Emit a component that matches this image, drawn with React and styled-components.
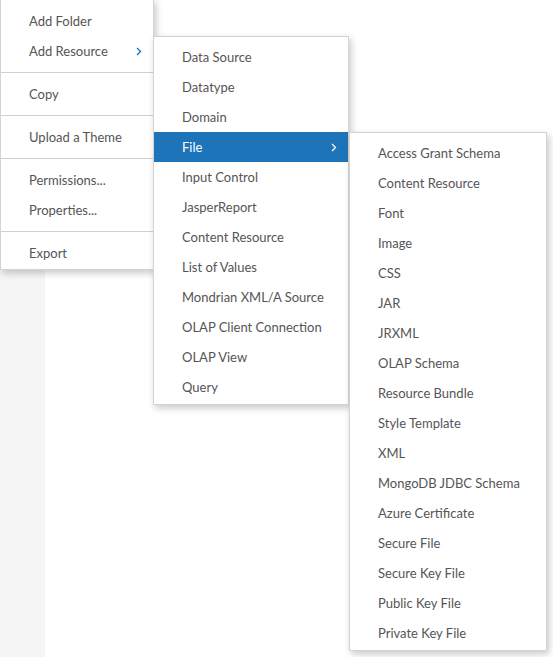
import React from "react";
import styled, { createGlobalStyle } from "styled-components";

const GlobalStyle = createGlobalStyle`
  html, body {
    margin: 0;
    padding: 0;
    height: 100%;
  }
  body {
    font-family: "Lato", "Liberation Sans", sans-serif;
    background: #ffffff;
  }
  #root {
    height: 100%;
  }
`;

const repoActions = [
  [{ label: "Add Folder" }, { label: "Add Resource", sub: "resource" }],
  [{ label: "Copy" }],
  [{ label: "Upload a Theme" }],
  [{ label: "Permissions..." }, { label: "Properties..." }],
  [{ label: "Export" }],
];

const resourceTypes = [
  { label: "Data Source" },
  { label: "Datatype" },
  { label: "Domain" },
  { label: "File", sub: "file", active: true },
  { label: "Input Control" },
  { label: "JasperReport" },
  { label: "Content Resource" },
  { label: "List of Values" },
  { label: "Mondrian XML/A Source" },
  { label: "OLAP Client Connection" },
  { label: "OLAP View" },
  { label: "Query" },
];

const fileTypes = [
  "Access Grant Schema",
  "Content Resource",
  "Font",
  "Image",
  "CSS",
  "JAR",
  "JRXML",
  "OLAP Schema",
  "Resource Bundle",
  "Style Template",
  "XML",
  "MongoDB JDBC Schema",
  "Azure Certificate",
  "Secure File",
  "Secure Key File",
  "Public Key File",
  "Private Key File",
].map((label) => ({ label }));

// small chevron shown on items that open a submenu
const Chevron = ({ color }) => (
  <svg width="6" height="9" viewBox="0 0 6 9" fill="none">
    <path d="M1 1l3.5 3.5L1 8" stroke={color} strokeWidth="1.3" />
  </svg>
);

function MenuItem({ item, children }) {
  return (
    <Item $active={item.active}>
      <Label>{item.label}</Label>
      {item.sub && (
        <Arrow>
          <Chevron color={item.active ? "#ffffff" : "#1f6fb5"} />
        </Arrow>
      )}
      {children}
    </Item>
  );
}

export default function App() {
  return (
    <Page>
      <GlobalStyle />
      <SideRail />
      <Workspace />

      <RootMenu>
        {repoActions.map((group, gi) => (
          <Group key={gi} $first={gi === 0}>
            {group.map((item) => (
              <MenuItem key={item.label} item={item}>
                {item.sub === "resource" && (
                  <SubMenu $width={196}>
                    {resourceTypes.map((res) => (
                      <MenuItem key={res.label} item={res}>
                        {res.sub === "file" && (
                          <SubMenu $width={198} $shift={1}>
                            {fileTypes.map((f) => (
                              <MenuItem key={f.label} item={f} />
                            ))}
                          </SubMenu>
                        )}
                      </MenuItem>
                    ))}
                  </SubMenu>
                )}
              </MenuItem>
            ))}
          </Group>
        ))}
      </RootMenu>
    </Page>
  );
}

const Page = styled.div`
  position: relative;
  display: grid;
  grid-template-columns: 45px 1fr;
  height: 100vh;
  overflow: hidden;
`;
const SideRail = styled.div`
  background: #f5f5f5;
`;
const Workspace = styled.div`
  background: #ffffff;
`;
const MenuPanel = styled.ul`
  list-style: none;
  margin: 0;
  padding: 5px 0 2px;
  background: #ffffff;
  border: 1px solid #d4d4d4;
  box-sizing: border-box;
  box-shadow: 2px 3px 7px rgba(0, 0, 0, 0.22);
`;
const RootMenu = styled(MenuPanel)`
  position: absolute;
  left: 0;
  top: -1px;
  width: 154px;
  padding: 0 0 1px;
  z-index: 1;
`;
const SubMenu = styled(MenuPanel)`
  position: absolute;
  left: calc(100% + ${(p) => p.$shift || 0}px);
  top: 0;
  width: ${(p) => p.$width}px;
`;
const Group = styled.li`
  padding: 6px 0 0;
  border-top: ${(p) => (p.$first ? "none" : "1px solid #cfcfcf")};
  margin-top: ${(p) => (p.$first ? "0" : "6px")};
  list-style: none;
`;
const Item = styled.li`
  position: relative;
  display: flex;
  align-items: center;
  height: 30px;
  padding: 0 11px 0 28px;
  font-size: 13px;
  color: ${(p) => (p.$active ? "#ffffff" : "#555555")};
  background: ${(p) => (p.$active ? "#1e74b9" : "transparent")};
  white-space: nowrap;
  cursor: default;
`;
const Label = styled.span`
  flex: 1;
  line-height: 30px;
`;
const Arrow = styled.span`
  display: flex;
  align-items: center;
`;
